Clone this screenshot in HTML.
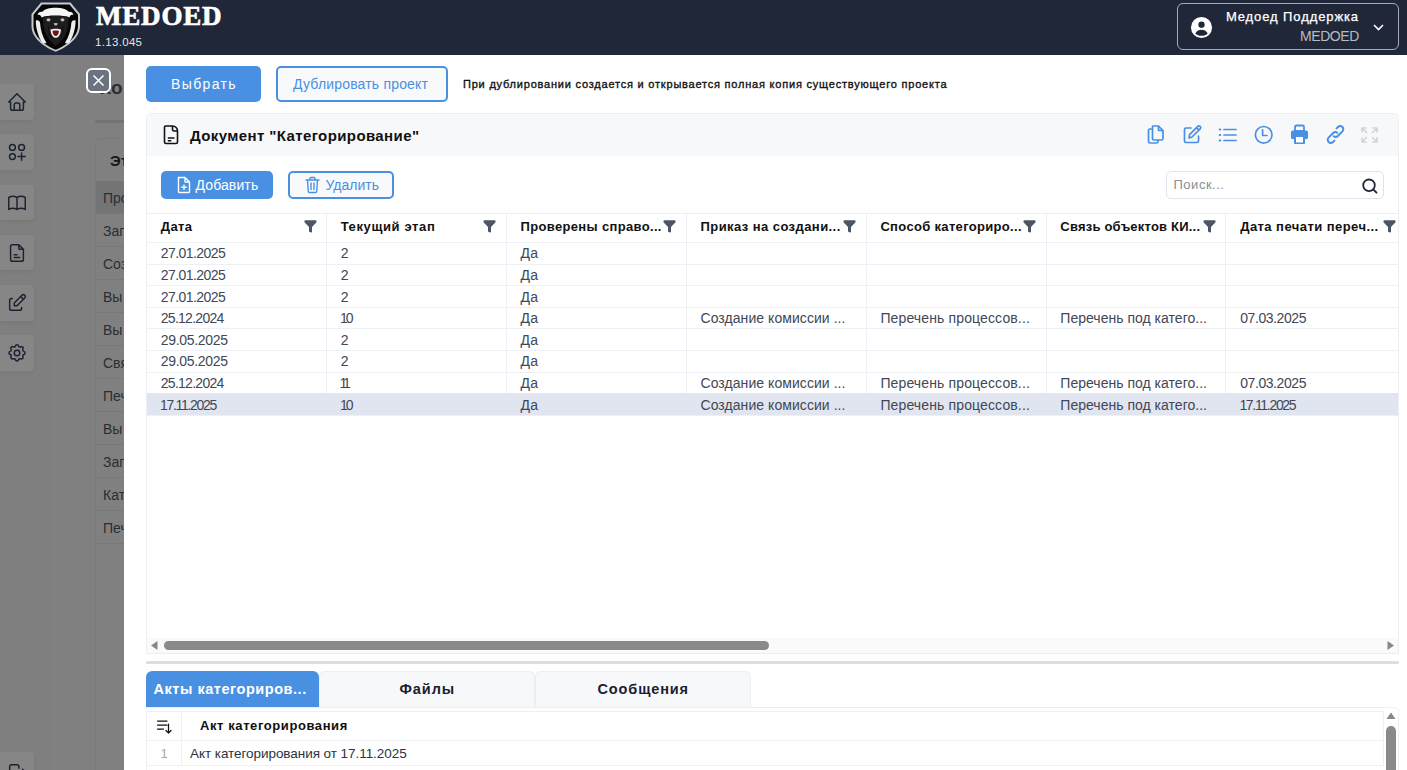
<!DOCTYPE html>
<html><head><meta charset="utf-8">
<style>
*{box-sizing:border-box;margin:0;padding:0}
html,body{width:1407px;height:770px;overflow:hidden;background:#808080;font-family:"Liberation Sans",sans-serif;position:relative}
.a{position:absolute}
.t{position:absolute;white-space:nowrap;line-height:1}
.sbb{position:absolute;left:0;width:34px;height:35.5px;background:#868686;border-radius:0 4px 4px 0;box-shadow:0 2px 4px rgba(0,0,0,.06)}
.sbb svg{position:absolute;left:5.5px;top:7px}
.btn{position:absolute;border-radius:5px}
.bb{background:#4a90e2}
.bo{background:#f7f9fb;border:2px solid #4a90e2}
</style></head><body>

<div class="a" style="left:0;top:0;width:1407px;height:55px;background:#1f2738"></div>
<svg class="a" style="left:30px;top:2px" width="52" height="52" viewBox="0 0 52 52">
  <path d="M11 0.5 L40.5 0.5 L50 12 L50 24 C50 36 37 45 25.7 49.8 C14 45 1.5 36 1.5 24 L1.5 12 Z" fill="#c9cacc"/>
  <path d="M12 2.5 L39.5 2.5 L48 12.8 L48 24 C48 35 36 43.5 25.7 47.8 C15 43.5 3.5 35 3.5 24 L3.5 12.8 Z" fill="#050505"/>
  <path d="M7.5 13 C8 10.5 10 9.5 12.5 9.8 C16 4.5 35 4.5 38.5 9.8 C41 9.5 43 10.5 43.5 13 C41.5 12.3 40 13 39.5 15.5 C36 14 31 13.6 25.5 13.6 C20 13.6 15 14 11.5 15.5 C11 13 9.5 12.3 7.5 13 Z" fill="#f6f6f6"/>
  <path d="M5.8 18.5 C7.5 17.8 9.3 18.5 10 20.5 C10.5 28 12.5 35 16.5 41 C14.8 41.8 12.8 41.3 11.8 40.2 C8 34 5.8 26 5.8 18.5 Z" fill="#ededed"/>
  <path d="M45.6 18.5 C43.9 17.8 42.1 18.5 41.4 20.5 C40.9 28 38.9 35 34.9 41 C36.6 41.8 38.6 41.3 39.6 40.2 C43.4 34 45.6 26 45.6 18.5 Z" fill="#ededed"/>
  <path d="M13 15 C17 13.8 34 13.8 38.5 15 C39 24 37 36 25.7 44 C14.5 36 12.5 24 13 15 Z" fill="#1d1d1d"/>
  <path d="M19 24 C17.5 29 19 34 22 37 M32.5 24 C34 29 32.5 34 29.5 37" stroke="#111" stroke-width="1" fill="none"/>
  <ellipse cx="18.5" cy="17.8" rx="2" ry="1.6" fill="#bdbdbd"/><ellipse cx="32.5" cy="17.8" rx="2" ry="1.6" fill="#bdbdbd"/>
  <path d="M23.5 21.5 C24.5 20.8 27 20.8 28 21.5 L26.5 23.5 L25 23.5 Z" fill="#bbb"/>
  <path d="M20.5 27.5 C23 26.5 28.5 26.5 31 27.5 C30.8 32.5 28.5 35.8 25.7 35.8 C23 35.8 20.7 32.5 20.5 27.5 Z" fill="#f0f0f0"/>
  <path d="M22.5 29 C24.5 28.4 27 28.4 29 29 C28.7 32.2 27.3 34 25.7 34 C24.2 34 22.8 32.2 22.5 29 Z" fill="#6e1414"/>
</svg>
<div class="t" style="left:96px;top:2.2px;font-family:'Liberation Serif',serif;font-weight:700;font-size:27px;color:#fff;letter-spacing:0.8px;line-height:28px;-webkit-text-stroke:0.7px #fff">MEDOED</div>
<div class="t" style="left:95px;top:37px;font-size:11.5px;color:#e6e6e6;letter-spacing:0.32px">1.13.045</div>
<div class="a" style="left:1177px;top:3px;width:222px;height:47px;border:1.5px solid #a9adb3;border-radius:6px"></div>
<svg class="a" style="left:1190px;top:16px" width="23" height="23" viewBox="0 0 24 24">
  <circle cx="12" cy="12" r="11" fill="#fff"/>
  <circle cx="12" cy="9" r="3.3" fill="#1f2738"/>
  <path d="M5.5 18.2 C7 15.2 9.5 14.3 12 14.3 C14.5 14.3 17 15.2 18.5 18.2 C17 19.8 14.7 20.6 12 20.6 C9.3 20.6 7 19.8 5.5 18.2 Z" fill="#1f2738"/>
</svg>
<div class="t" style="right:48px;top:9.5px;font-size:13px;color:#fff;letter-spacing:0.9px;-webkit-text-stroke:0.25px #fff">Медоед Поддержка</div>
<div class="t" style="right:48px;top:29px;font-size:14px;color:#b8bcc2;letter-spacing:-0.4px">MEDOED</div>
<svg class="a" style="left:1372px;top:22px" width="13" height="10" viewBox="0 0 13 10"><path d="M2 3 L6.5 7.5 L11 3" stroke="#fff" stroke-width="1.6" fill="none"/></svg>

<div class="a" style="left:0;top:55px;width:51px;height:715px;background:#7f7f7f;border-right:1px solid #7d7d7d"></div>
<div class="a" style="left:51px;top:55px;width:44px;height:715px;background:#808080"></div>
<div class="t" style="left:99.5px;top:78px;font-size:19px;font-weight:700;color:#2b2e33">Ко</div>
<div class="a" style="left:95px;top:120px;width:40px;height:3px;background:#717376;border-radius:2px"></div>
<div class="a" style="left:95px;top:138px;width:40px;height:632px;border-left:1px solid #7a7a7a;border-top:1px solid #7a7a7a;border-radius:5px 0 0 0"></div>
<div class="t" style="left:110px;top:153px;font-size:15px;font-weight:700;color:#15171b">Этапы</div>
<div class="a" style="left:96px;top:181px;width:40px;height:33px;background:#737476"></div>
<div class="a" style="left:96px;top:213px;width:40px;height:1px;background:#787879"></div>
<div class="t" style="left:103px;top:190.5px;font-size:14px;color:#2a2d33">Про</div>
<div class="a" style="left:96px;top:246px;width:40px;height:1px;background:#787879"></div>
<div class="t" style="left:103px;top:223.5px;font-size:14px;color:#2a2d33">Зап</div>
<div class="a" style="left:96px;top:279px;width:40px;height:1px;background:#787879"></div>
<div class="t" style="left:103px;top:256.5px;font-size:14px;color:#2a2d33">Соз</div>
<div class="a" style="left:96px;top:312px;width:40px;height:1px;background:#787879"></div>
<div class="t" style="left:103px;top:289.5px;font-size:14px;color:#2a2d33">Вы</div>
<div class="a" style="left:96px;top:345px;width:40px;height:1px;background:#787879"></div>
<div class="t" style="left:103px;top:322.5px;font-size:14px;color:#2a2d33">Вы</div>
<div class="a" style="left:96px;top:378px;width:40px;height:1px;background:#787879"></div>
<div class="t" style="left:103px;top:355.5px;font-size:14px;color:#2a2d33">Свя</div>
<div class="a" style="left:96px;top:411px;width:40px;height:1px;background:#787879"></div>
<div class="t" style="left:103px;top:388.5px;font-size:14px;color:#2a2d33">Печ</div>
<div class="a" style="left:96px;top:444px;width:40px;height:1px;background:#787879"></div>
<div class="t" style="left:103px;top:421.5px;font-size:14px;color:#2a2d33">Вы</div>
<div class="a" style="left:96px;top:477px;width:40px;height:1px;background:#787879"></div>
<div class="t" style="left:103px;top:454.5px;font-size:14px;color:#2a2d33">Зап</div>
<div class="a" style="left:96px;top:510px;width:40px;height:1px;background:#787879"></div>
<div class="t" style="left:103px;top:487.5px;font-size:14px;color:#2a2d33">Кат</div>
<div class="a" style="left:96px;top:543px;width:40px;height:1px;background:#787879"></div>
<div class="t" style="left:103px;top:520.5px;font-size:14px;color:#2a2d33">Печ</div>
<div class="sbb" style="top:84.00px"><svg width="22" height="22" viewBox="0 0 24 24"><path d="M5 12 H3 L12 3 L21 12 H19 M5 12 V19 C5 20.1 5.9 21 7 21 H17 C18.1 21 19 20.1 19 19 V12 M9 21 V15 C9 13.9 9.9 13 11 13 H13 C14.1 13 15 13.9 15 15 V21" stroke="#1c2230" stroke-width="1.6" fill="none" stroke-linecap="round" stroke-linejoin="round"/></svg></div>
<div class="sbb" style="top:134.25px"><svg width="22" height="22" viewBox="0 0 24 24"><circle cx="7" cy="7" r="3.2" stroke="#1c2230" stroke-width="1.6" fill="none" stroke-linecap="round" stroke-linejoin="round"/><circle cx="17" cy="7" r="3.2" stroke="#1c2230" stroke-width="1.6" fill="none" stroke-linecap="round" stroke-linejoin="round"/><circle cx="7" cy="17" r="3.2" stroke="#1c2230" stroke-width="1.6" fill="none" stroke-linecap="round" stroke-linejoin="round"/><path d="M17 13 V21 M13 17 H21" stroke="#1c2230" stroke-width="1.6" fill="none" stroke-linecap="round" stroke-linejoin="round"/></svg></div>
<div class="sbb" style="top:184.50px"><svg width="22" height="22" viewBox="0 0 24 24"><path d="M3 19 C5.7 17.4 9.3 17.4 12 19 C14.7 17.4 18.3 17.4 21 19 M3 6 C5.7 4.4 9.3 4.4 12 6 C14.7 4.4 18.3 4.4 21 6 M3 6 V19 M12 6 V19 M21 6 V19" stroke="#1c2230" stroke-width="1.6" fill="none" stroke-linecap="round" stroke-linejoin="round"/></svg></div>
<div class="sbb" style="top:234.75px"><svg width="22" height="22" viewBox="0 0 24 24"><path d="M14 3 V7 C14 7.6 14.4 8 15 8 H19 M17 21 H7 C5.9 21 5 20.1 5 19 V5 C5 3.9 5.9 3 7 3 H14 L19 8 V19 C19 20.1 18.1 21 17 21 Z M9 17 H15 M9 14 H12" stroke="#1c2230" stroke-width="1.6" fill="none" stroke-linecap="round" stroke-linejoin="round"/></svg></div>
<div class="sbb" style="top:285.00px"><svg width="22" height="22" viewBox="0 0 24 24"><path d="M7 7 H6 C4.9 7 4 7.9 4 9 V18 C4 19.1 4.9 20 6 20 H15 C16.1 20 17 19.1 17 18 V17 M20.4 6.6 C21.2 5.8 21.2 4.4 20.4 3.6 C19.6 2.8 18.2 2.8 17.4 3.6 L9 12 V15 H12 Z M16 5 L19 8" stroke="#1c2230" stroke-width="1.6" fill="none" stroke-linecap="round" stroke-linejoin="round"/></svg></div>
<div class="sbb" style="top:335.25px"><svg width="22" height="22" viewBox="0 0 24 24"><path d="M10.3 4.3 C10.7 2.6 13.3 2.6 13.7 4.3 C14 5.4 15.2 5.9 16.1 5.3 C17.6 4.4 19.4 6.2 18.5 7.7 C17.9 8.7 18.4 9.9 19.5 10.2 C21.2 10.6 21.2 13.2 19.5 13.6 C18.4 13.9 17.9 15.1 18.5 16 C19.4 17.5 17.6 19.3 16.1 18.4 C15.2 17.8 14 18.3 13.7 19.4 C13.3 21.1 10.7 21.1 10.3 19.4 C10 18.3 8.8 17.8 7.9 18.4 C6.4 19.3 4.6 17.5 5.5 16 C6.1 15.1 5.6 13.9 4.5 13.6 C2.8 13.2 2.8 10.6 4.5 10.2 C5.6 9.9 6.1 8.7 5.5 7.7 C4.6 6.2 6.4 4.4 7.9 5.3 C8.8 5.9 10 5.4 10.3 4.3 Z" stroke="#1c2230" stroke-width="1.6" fill="none" stroke-linecap="round" stroke-linejoin="round"/><circle cx="12" cy="12" r="3" stroke="#1c2230" stroke-width="1.6" fill="none" stroke-linecap="round" stroke-linejoin="round"/></svg></div>
<div class="sbb" style="top:752px"><svg width="22" height="22" viewBox="0 0 24 24" style="top:9px"><path d="M14 8 V6 C14 4.9 13.1 4 12 4 H6 C4.9 4 4 4.9 4 6 V18 C4 19.1 4.9 20 6 20 H12 C13.1 20 14 19.1 14 18 V16 M9 12 H21 M18 9 L21 12 L18 15" stroke="#1c2230" stroke-width="1.6" fill="none" stroke-linecap="round" stroke-linejoin="round"/></svg></div>
<div class="a" style="left:86px;top:68px;width:25px;height:25px;background:#6b7380;border:2px solid #fff;border-radius:6px"></div>
<svg class="a" style="left:86px;top:68px" width="25" height="25" viewBox="0 0 25 25"><path d="M7.5 7.5 L17.5 17.5 M17.5 7.5 L7.5 17.5" stroke="#fff" stroke-width="1.5"/></svg>
<div class="a" style="left:124px;top:55px;width:1283px;height:715px;background:#fff"></div>
<div class="btn bb" style="left:146px;top:66px;width:115px;height:36px"></div>
<div class="t" style="left:171px;top:77px;font-size:14px;color:#fff;letter-spacing:1.367px">Выбрать</div>
<div class="btn bo" style="left:276px;top:66px;width:172px;height:36px"></div>
<div class="t" style="left:293px;top:77px;font-size:14px;color:#4a90e2;letter-spacing:0.18px">Дублировать проект</div>
<div class="t" style="left:463px;top:79px;font-size:11px;color:#111;letter-spacing:0.79px;-webkit-text-stroke:0.35px #111">При дублировании создается и открывается полная копия существующего проекта</div>
<div class="a" style="left:146px;top:113px;width:1253px;height:541px;border:1px solid #eceef4;border-radius:5px 5px 0 0;background:#fff"></div>
<div class="a" style="left:147px;top:114px;width:1251px;height:42px;background:#f7f8fa;border-radius:5px 5px 0 0"></div>
<svg class="a" style="left:162px;top:124px" width="18" height="21" viewBox="0 0 18 21"><path d="M3.5 2 H10.5 C13.5 2 15.5 4.5 15.5 7 V18 C15.5 19 15 19.5 14 19.5 H4 C3 19.5 2.5 19 2.5 18 V3 C2.5 2.5 3 2 3.5 2 Z M10.5 2 V5.5 C10.5 6.5 11 7 12 7 H15.5 M5.8 14 H12.5 M5.8 16.8 H9.3" stroke="#111" stroke-width="1.6" fill="none" stroke-linejoin="round"/></svg>
<div class="t" style="left:190px;top:127.5px;font-size:15px;font-weight:700;color:#111;letter-spacing:0.392px">Документ "Категорирование"</div>


<svg class="a" style="left:1146px;top:124px" width="20" height="21" viewBox="0 0 20 21"><path d="M6.5 5 H4 C3 5 2.5 5.5 2.5 6.5 V17.5 C2.5 18.5 3 19 4 19 H10.5 C11.5 19 12 18.5 12 17.5 V16 M7 2 H12.5 L17 6.5 V14.5 C17 15.5 16.5 16 15.5 16 H8 C7 16 6.5 15.5 6.5 14.5 V3 C6.5 2.3 6.8 2 7 2 Z M12.5 2 V6.5 H17" stroke="#4a90e2" stroke-width="1.7" fill="none" stroke-linecap="round" stroke-linejoin="round"/></svg>
<svg class="a" style="left:1182px;top:124px" width="21" height="21" viewBox="0 0 21 21"><path d="M9 4 H4 C3 4 2.5 4.5 2.5 5.5 V17 C2.5 18 3 18.5 4 18.5 H15 C16 18.5 16.5 18 16.5 17 V12 M7 14 L7.6 10.6 L15.8 2.4 C16.4 1.8 17.6 1.8 18.2 2.4 C18.8 3 18.8 4.2 18.2 4.8 L10 13 Z M14.5 3.7 L16.9 6.1" stroke="#4a90e2" stroke-width="1.7" fill="none" stroke-linecap="round" stroke-linejoin="round"/></svg>
<svg class="a" style="left:1218px;top:127px" width="20" height="16" viewBox="0 0 20 16"><path d="M6 2.5 H18 M6 8 H18 M6 13.5 H18" stroke="#4a90e2" stroke-width="1.7" fill="none" stroke-linecap="round" stroke-linejoin="round"/><path d="M1.8 2.5 H2.2 M1.8 8 H2.2 M1.8 13.5 H2.2" stroke="#4a90e2" stroke-width="2.2" stroke-linecap="round"/></svg>
<svg class="a" style="left:1254px;top:125px" width="20" height="20" viewBox="0 0 20 20"><circle cx="9.7" cy="9.8" r="8.3" stroke="#4a90e2" stroke-width="1.7" fill="none" stroke-linecap="round" stroke-linejoin="round"/><path d="M8.6 4.8 V10.5 H13" stroke="#4a90e2" stroke-width="1.7" fill="none" stroke-linecap="round" stroke-linejoin="round"/></svg>
<svg class="a" style="left:1290px;top:124px" width="20" height="21" viewBox="0 0 20 21"><path d="M5 7 V3 C5 2 5.5 1.5 6.5 1.5 H12.5 C13.5 1.5 14 2 14 3 V7 Z" fill="none" stroke="#4a90e2" stroke-width="1.8"/><path d="M3 6.5 H16 C17.3 6.5 18 7.2 18 8.5 V13.5 C18 14.3 17.5 15 16.8 15 H15 V19 C15 19.6 14.6 20 14 20 H5 C4.4 20 4 19.6 4 19 V15 H2.2 C1.5 15 1 14.3 1 13.5 V8.5 C1 7.2 1.7 6.5 3 6.5 Z" fill="#4a90e2"/><rect x="6" y="13" width="7" height="5.5" fill="#fff"/></svg>
<svg class="a" style="left:1325px;top:124px" width="21" height="21" viewBox="0 0 21 21"><path d="M8.8 12.2 C9.8 13.2 11.6 13.2 12.6 12.2 L17.4 7.4 C18.6 6.2 18.6 4.2 17.4 3 C16.2 1.8 14.2 1.8 13 3 L11.6 4.4 M12.2 8.8 C11.2 7.8 9.4 7.8 8.4 8.8 L3.6 13.6 C2.4 14.8 2.4 16.8 3.6 18 C4.8 19.2 6.8 19.2 8 18 L9.4 16.6" stroke="#4a90e2" stroke-width="2" fill="none" stroke-linecap="round" stroke-linejoin="round"/></svg>
<svg class="a" style="left:1360px;top:126px" width="19" height="18" viewBox="0 0 19 18"><path d="M2 2 L6.5 6.5 M2 2 V6 M2 2 H6 M17 2 L12.5 6.5 M17 2 V6 M17 2 H13 M2 16 L6.5 11.5 M2 16 V12 M2 16 H6 M17 16 L12.5 11.5 M17 16 V12 M17 16 H13" stroke="#d0d3d8" stroke-width="1.6" fill="none" stroke-linecap="round"/></svg>


<div class="btn bb" style="left:161px;top:171px;width:112px;height:28px"></div>
<svg class="a" style="left:176px;top:176px" width="16" height="18" viewBox="0 0 16 18"><path d="M2.5 1.5 H9 L13.5 6 V15.5 C13.5 16.1 13.1 16.5 12.5 16.5 H3.5 C2.9 16.5 2.5 16.1 2.5 15.5 Z M9 1.5 V6 H13.5 M8 8.5 V14 M5.3 11.2 H10.7" stroke="#fff" stroke-width="1.4" fill="none" stroke-linejoin="round"/></svg>
<div class="t" style="left:195.5px;top:178px;font-size:14px;color:#fff;letter-spacing:0.114px">Добавить</div>
<div class="btn bo" style="left:288px;top:171px;width:106px;height:28px"></div>
<svg class="a" style="left:304px;top:176px" width="17" height="18" viewBox="0 0 17 18"><path d="M2 4 H15 M6 4 V2.5 C6 2 6.5 1.5 7 1.5 H10 C10.5 1.5 11 2 11 2.5 V4 M3.5 4 L4.3 15.5 C4.4 16.2 4.8 16.5 5.5 16.5 H11.5 C12.2 16.5 12.6 16.2 12.7 15.5 L13.5 4 M7 7 V13.5 M10 7 V13.5" stroke="#4a90e2" stroke-width="1.4" fill="none" stroke-linecap="round" stroke-linejoin="round"/></svg>
<div class="t" style="left:325.5px;top:178px;font-size:14px;color:#4a90e2;letter-spacing:0px">Удалить</div>
<div class="a" style="left:1166px;top:171px;width:218px;height:28px;border:1px solid #dfe3ee;border-radius:5px;background:#fff"></div>
<div class="t" style="left:1173.5px;top:178.3px;font-size:13px;color:#8a8d92;letter-spacing:0.514px">Поиск...</div>
<svg class="a" style="left:1361px;top:178px" width="18" height="16" viewBox="0 0 18 16"><circle cx="8" cy="7.3" r="5.8" stroke="#1f2738" stroke-width="1.8" fill="none"/><path d="M12.3 11.5 L15.5 14.7" stroke="#1f2738" stroke-width="1.8" stroke-linecap="round"/></svg>

<div class="a" style="left:147px;top:213px;width:1251px;height:1px;background:#eceef4"></div>
<div class="a" style="left:147px;top:242px;width:1251px;height:1px;background:#edf0f5"></div>
<div class="t" style="left:160.80px;top:220.3px;font-size:13px;font-weight:700;color:#111;letter-spacing:0.4px">Дата</div>
<svg class="a" style="left:303.50px;top:220px" width="13" height="13" viewBox="0 0 13 13"><path d="M0.5 1 C0.5 0.6 0.8 0.3 1.2 0.3 H11.8 C12.2 0.3 12.5 0.6 12.5 1 V2.3 L8 7 V11.8 C8 12.3 7.5 12.7 7 12.5 L5.7 12 C5.3 11.9 5 11.5 5 11 V7 L0.5 2.3 Z" fill="#4b5563"/></svg>
<div class="a" style="left:325.9px;top:214px;width:1px;height:202px;background:#eef0f5"></div>
<div class="t" style="left:340.70px;top:220.3px;font-size:13px;font-weight:700;color:#111;letter-spacing:0.618px">Текущий этап</div>
<svg class="a" style="left:483.40px;top:220px" width="13" height="13" viewBox="0 0 13 13"><path d="M0.5 1 C0.5 0.6 0.8 0.3 1.2 0.3 H11.8 C12.2 0.3 12.5 0.6 12.5 1 V2.3 L8 7 V11.8 C8 12.3 7.5 12.7 7 12.5 L5.7 12 C5.3 11.9 5 11.5 5 11 V7 L0.5 2.3 Z" fill="#4b5563"/></svg>
<div class="a" style="left:505.8px;top:214px;width:1px;height:202px;background:#eef0f5"></div>
<div class="t" style="left:520.60px;top:220.3px;font-size:13px;font-weight:700;color:#111;letter-spacing:0.333px">Проверены справо...</div>
<svg class="a" style="left:663.30px;top:220px" width="13" height="13" viewBox="0 0 13 13"><path d="M0.5 1 C0.5 0.6 0.8 0.3 1.2 0.3 H11.8 C12.2 0.3 12.5 0.6 12.5 1 V2.3 L8 7 V11.8 C8 12.3 7.5 12.7 7 12.5 L5.7 12 C5.3 11.9 5 11.5 5 11 V7 L0.5 2.3 Z" fill="#4b5563"/></svg>
<div class="a" style="left:685.7px;top:214px;width:1px;height:202px;background:#eef0f5"></div>
<div class="t" style="left:700.50px;top:220.3px;font-size:13px;font-weight:700;color:#111;letter-spacing:0.432px">Приказ на создани...</div>
<svg class="a" style="left:843.20px;top:220px" width="13" height="13" viewBox="0 0 13 13"><path d="M0.5 1 C0.5 0.6 0.8 0.3 1.2 0.3 H11.8 C12.2 0.3 12.5 0.6 12.5 1 V2.3 L8 7 V11.8 C8 12.3 7.5 12.7 7 12.5 L5.7 12 C5.3 11.9 5 11.5 5 11 V7 L0.5 2.3 Z" fill="#4b5563"/></svg>
<div class="a" style="left:865.6px;top:214px;width:1px;height:202px;background:#eef0f5"></div>
<div class="t" style="left:880.40px;top:220.3px;font-size:13px;font-weight:700;color:#111;letter-spacing:0.326px">Способ категориро...</div>
<svg class="a" style="left:1023.10px;top:220px" width="13" height="13" viewBox="0 0 13 13"><path d="M0.5 1 C0.5 0.6 0.8 0.3 1.2 0.3 H11.8 C12.2 0.3 12.5 0.6 12.5 1 V2.3 L8 7 V11.8 C8 12.3 7.5 12.7 7 12.5 L5.7 12 C5.3 11.9 5 11.5 5 11 V7 L0.5 2.3 Z" fill="#4b5563"/></svg>
<div class="a" style="left:1045.5px;top:214px;width:1px;height:202px;background:#eef0f5"></div>
<div class="t" style="left:1060.30px;top:220.3px;font-size:13px;font-weight:700;color:#111;letter-spacing:0.211px">Связь объектов КИ...</div>
<svg class="a" style="left:1203.00px;top:220px" width="13" height="13" viewBox="0 0 13 13"><path d="M0.5 1 C0.5 0.6 0.8 0.3 1.2 0.3 H11.8 C12.2 0.3 12.5 0.6 12.5 1 V2.3 L8 7 V11.8 C8 12.3 7.5 12.7 7 12.5 L5.7 12 C5.3 11.9 5 11.5 5 11 V7 L0.5 2.3 Z" fill="#4b5563"/></svg>
<div class="a" style="left:1225.4px;top:214px;width:1px;height:202px;background:#eef0f5"></div>
<div class="t" style="left:1240.20px;top:220.3px;font-size:13px;font-weight:700;color:#111;letter-spacing:0.442px">Дата печати переч...</div>
<svg class="a" style="left:1382.90px;top:220px" width="13" height="13" viewBox="0 0 13 13"><path d="M0.5 1 C0.5 0.6 0.8 0.3 1.2 0.3 H11.8 C12.2 0.3 12.5 0.6 12.5 1 V2.3 L8 7 V11.8 C8 12.3 7.5 12.7 7 12.5 L5.7 12 C5.3 11.9 5 11.5 5 11 V7 L0.5 2.3 Z" fill="#4b5563"/></svg>
<div class="a" style="left:147px;top:263.60px;width:1251px;height:1px;background:#edf0f5"></div>
<div class="t" style="left:160.80px;top:246.40px;font-size:14px;color:#404756;letter-spacing:-0.578px">27.01.2025</div>
<div class="t" style="left:340.70px;top:246.40px;font-size:14px;color:#404756;letter-spacing:0px">2</div>
<div class="t" style="left:520.60px;top:246.40px;font-size:14px;color:#404756;letter-spacing:0.1px">Да</div>
<div class="a" style="left:147px;top:285.20px;width:1251px;height:1px;background:#edf0f5"></div>
<div class="t" style="left:160.80px;top:268.00px;font-size:14px;color:#404756;letter-spacing:-0.578px">27.01.2025</div>
<div class="t" style="left:340.70px;top:268.00px;font-size:14px;color:#404756;letter-spacing:0px">2</div>
<div class="t" style="left:520.60px;top:268.00px;font-size:14px;color:#404756;letter-spacing:0.1px">Да</div>
<div class="a" style="left:147px;top:306.80px;width:1251px;height:1px;background:#edf0f5"></div>
<div class="t" style="left:160.80px;top:289.60px;font-size:14px;color:#404756;letter-spacing:-0.578px">27.01.2025</div>
<div class="t" style="left:340.70px;top:289.60px;font-size:14px;color:#404756;letter-spacing:0px">2</div>
<div class="t" style="left:520.60px;top:289.60px;font-size:14px;color:#404756;letter-spacing:0.1px">Да</div>
<div class="a" style="left:147px;top:328.40px;width:1251px;height:1px;background:#edf0f5"></div>
<div class="t" style="left:160.80px;top:311.20px;font-size:14px;color:#404756;letter-spacing:-0.733px">25.12.2024</div>
<div class="t" style="left:340.10px;top:311.20px;font-size:14px;color:#404756;letter-spacing:-2.2px">10</div>
<div class="t" style="left:520.60px;top:311.20px;font-size:14px;color:#404756;letter-spacing:0.1px">Да</div>
<div class="t" style="left:700.50px;top:311.20px;font-size:14px;color:#404756;letter-spacing:0.06px">Создание комиссии ...</div>
<div class="t" style="left:880.40px;top:311.20px;font-size:14px;color:#404756;letter-spacing:0.13px">Перечень процессов...</div>
<div class="t" style="left:1060.30px;top:311.20px;font-size:14px;color:#404756;letter-spacing:0.019px">Перечень под катего...</div>
<div class="t" style="left:1240.20px;top:311.20px;font-size:14px;color:#404756;letter-spacing:-0.422px">07.03.2025</div>
<div class="a" style="left:147px;top:350.00px;width:1251px;height:1px;background:#edf0f5"></div>
<div class="t" style="left:160.80px;top:332.80px;font-size:14px;color:#404756;letter-spacing:-0.311px">29.05.2025</div>
<div class="t" style="left:340.70px;top:332.80px;font-size:14px;color:#404756;letter-spacing:0px">2</div>
<div class="t" style="left:520.60px;top:332.80px;font-size:14px;color:#404756;letter-spacing:0.1px">Да</div>
<div class="a" style="left:147px;top:371.60px;width:1251px;height:1px;background:#edf0f5"></div>
<div class="t" style="left:160.80px;top:354.40px;font-size:14px;color:#404756;letter-spacing:-0.311px">29.05.2025</div>
<div class="t" style="left:340.70px;top:354.40px;font-size:14px;color:#404756;letter-spacing:0px">2</div>
<div class="t" style="left:520.60px;top:354.40px;font-size:14px;color:#404756;letter-spacing:0.1px">Да</div>
<div class="a" style="left:147px;top:393.20px;width:1251px;height:1px;background:#edf0f5"></div>
<div class="t" style="left:160.80px;top:376.00px;font-size:14px;color:#404756;letter-spacing:-0.733px">25.12.2024</div>
<div class="t" style="left:339.50px;top:376.00px;font-size:14px;color:#404756;letter-spacing:-3.2px">11</div>
<div class="t" style="left:520.60px;top:376.00px;font-size:14px;color:#404756;letter-spacing:0.1px">Да</div>
<div class="t" style="left:700.50px;top:376.00px;font-size:14px;color:#404756;letter-spacing:0.06px">Создание комиссии ...</div>
<div class="t" style="left:880.40px;top:376.00px;font-size:14px;color:#404756;letter-spacing:0.13px">Перечень процессов...</div>
<div class="t" style="left:1060.30px;top:376.00px;font-size:14px;color:#404756;letter-spacing:0.019px">Перечень под катего...</div>
<div class="t" style="left:1240.20px;top:376.00px;font-size:14px;color:#404756;letter-spacing:-0.422px">07.03.2025</div>
<div class="a" style="left:147px;top:393.20000000000005px;width:1251px;height:22px;background:#e1e5f0"></div>
<div class="a" style="left:147px;top:414.80px;width:1251px;height:1px;background:#edf0f5"></div>
<div class="t" style="left:160.00px;top:397.60px;font-size:14px;color:#404756;letter-spacing:-1.311px">17.11.2025</div>
<div class="t" style="left:340.10px;top:397.60px;font-size:14px;color:#404756;letter-spacing:-2.2px">10</div>
<div class="t" style="left:520.60px;top:397.60px;font-size:14px;color:#404756;letter-spacing:0.1px">Да</div>
<div class="t" style="left:700.50px;top:397.60px;font-size:14px;color:#404756;letter-spacing:0.06px">Создание комиссии ...</div>
<div class="t" style="left:880.40px;top:397.60px;font-size:14px;color:#404756;letter-spacing:0.13px">Перечень процессов...</div>
<div class="t" style="left:1060.30px;top:397.60px;font-size:14px;color:#404756;letter-spacing:0.019px">Перечень под катего...</div>
<div class="t" style="left:1239.40px;top:397.60px;font-size:14px;color:#404756;letter-spacing:-1.311px">17.11.2025</div>

<div class="a" style="left:147px;top:638px;width:1251px;height:15px;background:#fafafa"></div>
<svg class="a" style="left:150px;top:640px" width="9" height="11" viewBox="0 0 9 11"><path d="M1 5.5 L7.5 1 V10 Z" fill="#888"/></svg>
<div class="a" style="left:164px;top:641px;width:605px;height:9px;background:#8a8a8a;border-radius:5px"></div>
<svg class="a" style="left:1386px;top:640px" width="9" height="11" viewBox="0 0 9 11"><path d="M8 5.5 L1.5 1 V10 Z" fill="#888"/></svg>
<div class="a" style="left:146px;top:660.5px;width:1253px;height:3.2px;background:#dedede;border-radius:2px"></div>


<div class="a" style="left:146px;top:671px;width:173px;height:36px;background:#4a90e2;border-radius:6px 6px 0 0"></div>
<div class="t" style="left:153.5px;top:682px;font-size:14.5px;font-weight:700;color:#fff;letter-spacing:0.544px">Акты категориров...</div>
<div class="a" style="left:319px;top:671px;width:216px;height:36px;background:#f7f8fa;border:1px solid #eceef4;border-bottom:none;border-radius:6px 6px 0 0"></div>
<div class="t" style="left:399.5px;top:682px;font-size:14.5px;font-weight:700;color:#1a2030;letter-spacing:0.95px">Файлы</div>
<div class="a" style="left:535px;top:671px;width:216px;height:36px;background:#f7f8fa;border:1px solid #eceef4;border-bottom:none;border-radius:6px 6px 0 0"></div>
<div class="t" style="left:597.5px;top:682px;font-size:14.5px;font-weight:700;color:#1a2030;letter-spacing:0.875px">Сообщения</div>
<div class="a" style="left:146px;top:707px;width:1253px;height:63px;border:1px solid #eceef4;border-bottom:none;border-radius:0 5px 0 0"></div>
<div class="a" style="left:146px;top:711px;width:1238px;height:55px;border:1px solid #eef0f5;border-left:none"></div>
<div class="a" style="left:147px;top:740px;width:1237px;height:1px;background:#eef0f5"></div>
<div class="a" style="left:181px;top:711px;width:1px;height:55px;background:#eef0f5"></div>
<svg class="a" style="left:156px;top:719px" width="17" height="16" viewBox="0 0 17 16"><path d="M1.5 2 H11 M1.5 6 H11 M1.5 10 H7.5 M12.5 5 V14 M10 11.5 L12.5 14 L15 11.5" stroke="#111" stroke-width="1.25" fill="none" stroke-linecap="round" stroke-linejoin="round"/></svg>
<div class="t" style="left:200px;top:718.6px;font-size:13px;font-weight:700;color:#111;letter-spacing:0.589px">Акт категорирования</div>
<div class="t" style="left:160.5px;top:747px;font-size:13px;color:#a8a8a8">1</div>
<div class="t" style="left:190px;top:746.8px;font-size:13.5px;color:#2d3340;letter-spacing:-0.056px">Акт категорирования от 17.11.2025</div>
<svg class="a" style="left:1385px;top:711px" width="12" height="9" viewBox="0 0 12 9"><path d="M6 1.5 L10.5 8 H1.5 Z" fill="#888"/></svg>
<div class="a" style="left:1386px;top:726px;width:10px;height:60px;background:#8a8a8a;border-radius:5px"></div>

</body></html>
